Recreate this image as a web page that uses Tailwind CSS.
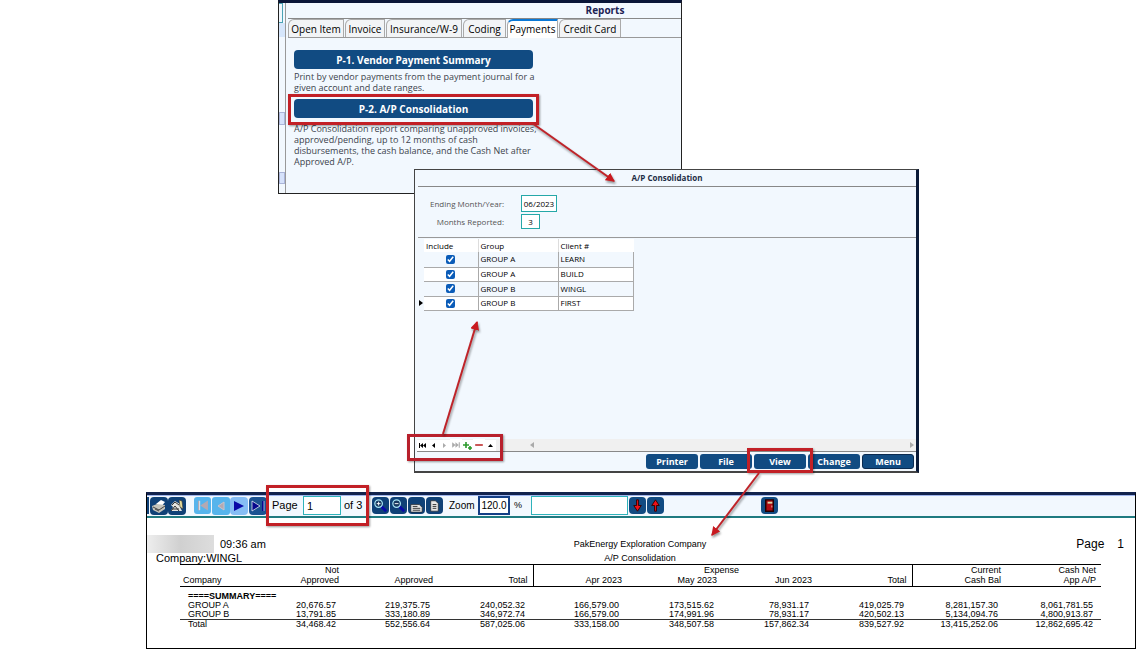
<!DOCTYPE html>
<html lang="en">
<head>
<meta charset="utf-8">
<title>A/P Consolidation</title>
<script src="https://cdn.jsdelivr.net/npm/@tailwindcss/browser@4"></script>
</head>
<body class="relative min-h-screen overflow-hidden bg-white font-['Open_Sans',sans-serif] text-black">

<!-- Reports window -->
<section class="absolute left-[278px] top-0 flex h-[194px] w-[404px] border border-t-3 border-[#222] border-t-[#0a1638] bg-[#f2f8fe]">
  <div class="flex w-[7px] flex-col border-r border-[#999]">
    <div class="h-[20px] w-[4px] border border-l-0 border-[#4ba3b5]"></div>
    <div class="h-[14px] bg-[#d6e6fb]"></div>
    <div class="mt-[75px] h-[13px] border border-[#aab4d8] bg-[#d6e2fb]"></div>
    <div class="mt-[47px] h-[12px] border border-[#aab4d8] bg-[#d6e2fb]"></div>
  </div>
  <div class="flex-1 pl-[2px]">
    <h1 class="flex h-[16px] items-center justify-center border-b border-[#888] pb-[2px] pl-[241px] text-[10px] font-bold leading-none text-[#1d2355]">Reports</h1>
    <div role="tablist" class="flex h-[19px] gap-px border-b border-[#999] text-[10px] leading-none">
      <button role="tab" class="w-[56px] whitespace-nowrap rounded-tl-md border border-b-0 border-[#aaa] bg-[#f2f4f6]">Open Item</button>
      <button role="tab" class="w-[40px] rounded-tl-md border border-b-0 border-[#aaa] bg-[#f2f4f6]">Invoice</button>
      <button role="tab" class="w-[76px] rounded-tl-md border border-b-0 border-[#aaa] bg-[#f2f4f6]">Insurance/W-9</button>
      <button role="tab" class="w-[43px] rounded-tl-md border border-b-0 border-[#aaa] bg-[#f2f4f6]">Coding</button>
      <button role="tab" aria-selected="true" class="-mb-px w-[51px] rounded-tl-md border border-b-0 border-t-2 border-[#aaa] border-t-[#0a78d6] bg-white pb-[2px]">Payments</button>
      <button role="tab" class="w-[62px] whitespace-nowrap rounded-tl-md border border-b-0 border-[#aaa] bg-[#f2f4f6]">Credit Card</button>
    </div>
    <div class="flex w-[245px] flex-col pl-[6px] pt-[12px]">
      <button class="h-[19px] rounded-[4px] bg-[#114b82] text-[10px] font-bold leading-none text-white">P-1. Vendor Payment Summary</button>
      <p class="mt-[2px] whitespace-nowrap text-[9px] leading-[11px] text-[#3c434c]">Print by vendor payments from the payment journal for a<br>given account and date ranges.</p>
      <button class="mt-[6px] h-[19px] rounded-[4px] bg-[#114b82] text-[10px] font-bold leading-none text-white">P-2. A/P Consolidation</button>
      <p class="mt-[5px] whitespace-nowrap text-[9px] leading-[11px] text-[#3c434c]">A/P Consolidation report comparing unapproved invoices,<br>approved/pending, up to 12 months of cash<br>disbursements, the cash balance, and the Cash Net after<br>Approved A/P.</p>
    </div>
  </div>
</section>

<!-- A/P Consolidation window -->
<section class="absolute left-[414px] top-[169px] flex h-[304px] w-[505px] flex-col border border-r-3 border-b-2 border-[#444] border-r-[#0a1a38] bg-[#f2f8fe]">
  <h2 class="ml-[3px] flex h-[17px] items-center justify-center border-b border-[#888] text-[8px] font-bold leading-none text-[#1d2d45]">A/P Consolidation</h2>
  <form class="ml-[3px] grid h-[51px] grid-cols-[86px_1fr] content-start items-center gap-x-[17px] gap-y-[2px] border-b border-[#999] pt-[8px] text-[8px] leading-none text-[#555]">
    <label for="ending" class="whitespace-nowrap text-right">Ending Month/Year:</label>
    <input id="ending" value="06/2023" class="h-[17px] w-[36px] border border-[#25a8a8] bg-white text-center text-[8px] text-black">
    <label for="months" class="whitespace-nowrap text-right">Months Reported:</label>
    <input id="months" value="3" class="h-[15px] w-[19px] border border-[#25a8a8] bg-white text-center text-[8px] text-black">
  </form>
  <div class="flex">
    <div class="flex w-[9px] items-end pb-[5px] pl-[4px]"><svg class="h-[6px] w-[4px]" viewBox="0 0 4 6"><path d="M0 0L4 3L0 6Z"/></svg></div>
    <table class="mt-px w-[209px] table-fixed border-collapse bg-white text-[8px] leading-none">
      <colgroup><col class="w-[54px]"><col class="w-[80px]"><col class="w-[75px]"></colgroup>
      <thead><tr class="h-[13px] text-left"><th class="p-0 pl-[2px] font-normal">Include</th><th class="border-l border-[#ddd] p-0 pl-[2px] font-normal">Group</th><th class="border-l border-[#ddd] p-0 pl-[2px] font-normal">Client #</th></tr></thead>
      <tbody>
        <tr class="h-[15px] bg-[#f2f8fe]"><td class="border-b border-[#aaa] text-center"><input type="checkbox" checked aria-label="Include LEARN" class="mx-auto block size-[9px] accent-[#0b5cb8]"></td><td class="border-x border-b border-[#aaa] pl-[2px]">GROUP A</td><td class="border-x border-b border-[#aaa] pl-[2px]">LEARN</td></tr>
        <tr class="h-[14px]"><td class="border-b border-[#aaa] text-center"><input type="checkbox" checked aria-label="Include BUILD" class="mx-auto block size-[9px] accent-[#0b5cb8]"></td><td class="border-x border-b border-[#aaa] pl-[2px]">GROUP A</td><td class="border-x border-b border-[#aaa] pl-[2px]">BUILD</td></tr>
        <tr class="h-[15px] bg-[#f2f8fe]"><td class="border-b border-[#aaa] text-center"><input type="checkbox" checked aria-label="Include WINGL" class="mx-auto block size-[9px] accent-[#0b5cb8]"></td><td class="border-x border-b border-[#aaa] pl-[2px]">GROUP B</td><td class="border-x border-b border-[#aaa] pl-[2px]">WINGL</td></tr>
        <tr class="h-[14px]"><td class="border-b border-[#aaa] text-center"><input type="checkbox" checked aria-label="Include FIRST" class="mx-auto block size-[9px] accent-[#0b5cb8]"></td><td class="border-x border-b border-[#aaa] pl-[2px]">GROUP B</td><td class="border-x border-b border-[#aaa] pl-[2px]">FIRST</td></tr>
      </tbody>
    </table>
  </div>
  <div class="mt-auto ml-[2px] flex h-[13px] items-center border-b border-[#888] bg-[#f0f0f0]">
    <button aria-label="First" class="size-[11px] bg-white"><svg viewBox="0 0 11 11"><path d="M2 3h1v5H2zM6 3v5L3 5.500zM9 3v5L6 5.500z"/></svg></button>
    <button aria-label="Previous" class="size-[11px] bg-white"><svg viewBox="0 0 11 11"><path d="M7 3v5L4 5.500z"/></svg></button>
    <button aria-label="Next" class="size-[11px] bg-white"><svg viewBox="0 0 11 11"><path d="M4 3l3 2.500L4 8z" fill="#aaa"/></svg></button>
    <button aria-label="Last" class="size-[12px] bg-white"><svg viewBox="0 0 11 11"><path d="M2 3l3 2.500L2 8zM5 3l3 2.500L5 8zM8 3h1v5H8z" fill="#aaa"/></svg></button>
    <button aria-label="Add" class="size-[11px] bg-white"><svg viewBox="0 0 11 11"><path d="M4 2v6M1 5h6M8 6v4M6 8h4" stroke="#2c9a2c" stroke-width="1.600"/></svg></button>
    <button aria-label="Delete" class="size-[12px] bg-white"><svg viewBox="0 0 11 11"><path d="M2 5.500h7" stroke="#c03030" stroke-width="1.500"/></svg></button>
    <button aria-label="Up" class="size-[11px] bg-white"><svg viewBox="0 0 11 11"><path d="M3 7l2.500-3L8 7z"/></svg></button>
    <div class="flex flex-1 items-center justify-between pl-[34px] pr-[2px]">
      <svg class="h-[6px] w-[4px]" viewBox="0 0 4 6"><path d="M4 0v6L0 3z" fill="#aaa"/></svg>
      <svg class="h-[6px] w-[4px]" viewBox="0 0 4 6"><path d="M0 0v6l4-3z" fill="#aaa"/></svg>
    </div>
  </div>
  <div class="flex h-[19px] items-center justify-end gap-[2px] pr-[2px] text-[9px] font-bold leading-none text-white">
    <button class="h-[15px] w-[52px] rounded-[3px] bg-[#114b82]">Printer</button>
    <button class="h-[15px] w-[52px] rounded-[3px] bg-[#114b82]">File</button>
    <button class="h-[15px] w-[52px] rounded-[3px] bg-[#114b82]">View</button>
    <button class="h-[15px] w-[52px] rounded-[3px] bg-[#114b82]">Change</button>
    <button class="h-[15px] w-[52px] rounded-[3px] border border-[#0a2a50] bg-[#114b82]">Menu</button>
  </div>
</section>

<!-- Report preview window -->
<section class="absolute left-[146px] right-0 top-[492px] flex h-[157px] flex-col border border-t-3 border-black border-t-[#12234d] bg-white font-['Liberation_Sans',sans-serif]">
  <div class="flex h-[23px] items-center border-b-2 border-t border-b-[#1f7a80] border-t-[#9fb4ec] bg-[#f2f8fe] pb-px text-[11px] leading-none">
    <div class="h-[17px] w-[2px] bg-[#0f4177]"></div>
    <button aria-label="Print" class="ml-px size-[18px] rounded-[4px] bg-[#0f4177]"><svg viewBox="0 0 18 18"><path d="M6 7l5-4 4 2-4 5z" fill="#fff"/><path d="M2 9l5-2 8 1v4l-6 4-6-3z" fill="#c4c4bc"/><path d="M3 10l6 3 6-4M5 12l4 2" stroke="#444" fill="none"/></svg></button>
    <button aria-label="Print setup" class="size-[18px] rounded-[4px] bg-[#0f4177]"><svg viewBox="0 0 18 18"><path d="M3 8l4-4 5 3v3l2 4H3l2-4z" fill="#e4e4e0"/><path d="M4 8l3-3 4 3M3 14l4-5 4 5M4 12h7" stroke="#333" fill="none"/><path d="M11 3l3 1 1 8-3-2z" fill="#e6dc9a" stroke="#333" stroke-width=".6"/></svg></button>
    <button aria-label="First page" class="ml-[8px] size-[17px] rounded-[3px] bg-[#56b4ec]"><svg viewBox="0 0 18 18"><path d="M5 4v10M14 5v8L8 9z" fill="#b4a9b2" stroke="#b4a9b2" stroke-width="1.500"/><path d="M6 14V4" stroke="#e5e8f0"/></svg></button>
    <button aria-label="Previous page" class="ml-px size-[18px] rounded-[3px] bg-[#56b4ec]"><svg viewBox="0 0 18 18"><path d="M12 5v8L6 9z" fill="#b4a9b2" stroke="#c9c3cc"/></svg></button>
    <button aria-label="Next page" class="size-[18px] rounded-[4px] bg-[#86bdf5]"><svg viewBox="0 0 18 18"><path d="M4 4l10 5-10 5z" fill="#0909a8"/></svg></button>
    <button aria-label="Last page" class="ml-px size-[18px] rounded-[4px] bg-[#1b5292]"><svg viewBox="0 0 18 18"><path d="M3 4l8 5-8 5z" fill="#07078d" stroke="#fff" stroke-width=".7"/><path d="M14 4v10" stroke="#07078d" stroke-width="2"/><path d="M15 4v10" stroke="#dce7ff" stroke-width=".7"/></svg></button>
    <label for="page" class="ml-[5px] w-[31px]">Page</label>
    <input id="page" value="1" class="h-[19px] w-[38px] border border-[#2fb3bb] bg-white px-[3px]">
    <span class="ml-[3px] w-[28px] whitespace-nowrap">of 3</span>
    <button aria-label="Zoom in" class="size-[17px] rounded-[4px] bg-[#0f4177]"><svg viewBox="0 0 18 18"><path d="M10 10l5 5" stroke="#0909a8" stroke-width="3"/><circle cx="7" cy="7" r="4" fill="#17385f" stroke="#a8e5f5" stroke-width="1.300"/><path d="M7 5v4M5 7h4" stroke="#fff"/></svg></button>
    <button aria-label="Zoom out" class="ml-px size-[17px] rounded-[4px] bg-[#0f4177]"><svg viewBox="0 0 18 18"><path d="M10 10l5 5" stroke="#0909a8" stroke-width="3"/><circle cx="7" cy="7" r="4" fill="#17385f" stroke="#a8e5f5" stroke-width="1.300"/><path d="M5 7h4" stroke="#fff"/></svg></button>
    <button aria-label="Page width" class="ml-px size-[17px] rounded-[4px] bg-[#0f4177]"><svg viewBox="0 0 18 18"><path d="M3 8h9l3 3v5H3z" fill="#e8e8e8" stroke="#222" stroke-width=".7"/><path d="M5 10h5M5 12h8M5 14h8" stroke="#333"/></svg></button>
    <button aria-label="Whole page" class="ml-px size-[17px] rounded-[4px] bg-[#0f4177]"><svg viewBox="0 0 18 18"><path d="M5 4h5l3 3v8H5z" fill="#e8e8e8" stroke="#222" stroke-width=".7"/><path d="M7 8h4M7 10h4M7 12h4" stroke="#333"/></svg></button>
    <label for="zoom" class="ml-[6px] w-[29px] whitespace-nowrap text-[10px]">Zoom</label>
    <input id="zoom" value="120.0" class="h-[19px] w-[32px] border-2 border-[#143f86] bg-white text-center text-[10px]">
    <span class="ml-[4px] w-[17px] text-[9px]">%</span>
    <input aria-label="Find" class="h-[19px] w-[97px] border border-[#2fb3bb] bg-white">
    <button aria-label="Find next" class="ml-px size-[17px] rounded-[4px] bg-[#114b82]"><svg viewBox="0 0 18 18"><path d="M8 3h2v6h3l-4 6-4-6h3z" fill="#f01018" stroke="#300"/></svg></button>
    <button aria-label="Find previous" class="ml-px size-[17px] rounded-[4px] bg-[#114b82]"><svg viewBox="0 0 18 18"><path d="M8 15h2V9h3L9 3 5 9h3z" fill="#f01018" stroke="#300"/></svg></button>
    <button aria-label="Close" class="ml-[97px] size-[17px] rounded-[4px] bg-[#114b82]"><svg viewBox="0 0 18 18"><path d="M5 3h8v12H5z" fill="#b00c14" stroke="#200" stroke-width="1.500"/><path d="M7 5h5v2H7z" fill="#d8d8a8"/><path d="M11 9h1v2h-1z" fill="#ffb0a0"/></svg></button>
  </div>

  <div class="mt-[17px] grid h-[29px] grid-cols-[1fr_200px_1fr] grid-rows-[18px_11px] pr-[2px] leading-none">
    <div class="flex items-center gap-[6px] text-[11px]">
      <span class="h-[18px] w-[67px] bg-linear-to-r from-[#eee] via-[#d0d0d0] to-[#ddd]"></span>
      <span>09:36 am</span>
    </div>
    <div class="flex items-center justify-center whitespace-nowrap pt-px text-[9px]">PakEnergy Exploration Company</div>
    <div class="flex items-center justify-end gap-[13px] pr-[9px] text-[12px]"><span>Page</span><span>1</span></div>
    <div class="pl-[9px] text-[11px]">Company:WINGL</div>
    <div class="whitespace-nowrap pt-px text-center text-[9px]">A/P Consolidation</div>
  </div>

  <div class="pl-[33px] pr-[34px]">
    <table class="w-full table-fixed border-collapse border-t border-black text-right text-[9px] leading-none">
      <colgroup><col class="w-[69px]"><col class="w-[95px]"><col class="w-[94px]"><col class="w-[95px]"><col class="w-[94px]"><col class="w-[95px]"><col class="w-[95px]"><col class="w-[95px]"><col class="w-[94px]"><col class="w-[95px]"></colgroup>
      <thead class="[&_th]:p-0 [&_th]:pr-[5px] [&_th]:font-normal">
        <tr class="h-[11px]"><th></th><th>Not</th><th></th><th class="border-r border-black"></th><th></th><th><span class="-mr-[22px]">Expense</span></th><th></th><th class="border-r border-black"></th><th>Current</th><th>Cash Net</th></tr>
        <tr class="h-[11px] border-b border-black"><th class="text-left"><span class="pl-[3px]">Company</span></th><th>Approved</th><th>Approved</th><th class="border-r border-black">Total</th><th>Apr 2023</th><th>May 2023</th><th>Jun 2023</th><th class="border-r border-black">Total</th><th>Cash Bal</th><th>App A/P</th></tr>
      </thead>
      <tbody class="[&_td]:p-0 [&_td]:pr-[8px] [&_th]:whitespace-nowrap [&_th]:p-0 [&_th]:pl-[8px] [&_th]:text-left">
        <tr class="h-[14px]"><th colspan="10" class="align-bottom font-bold">====SUMMARY====</th></tr>
        <tr class="h-[9px]"><th class="font-normal">GROUP A</th><td>20,676.57</td><td>219,375.75</td><td>240,052.32</td><td>166,579.00</td><td>173,515.62</td><td>78,931.17</td><td>419,025.79</td><td>8,281,157.30</td><td>8,061,781.55</td></tr>
        <tr class="h-[10px] border-b border-[#333]"><th class="font-normal">GROUP B</th><td>13,791.85</td><td>333,180.89</td><td>346,972.74</td><td>166,579.00</td><td>174,991.96</td><td>78,931.17</td><td>420,502.13</td><td>5,134,094.76</td><td>4,800,913.87</td></tr>
        <tr class="h-[9px]"><th class="font-normal">Total</th><td>34,468.42</td><td>552,556.64</td><td>587,025.06</td><td>333,158.00</td><td>348,507.58</td><td>157,862.34</td><td>839,527.92</td><td>13,415,252.06</td><td>12,862,695.42</td></tr>
      </tbody>
    </table>
  </div>
</section>

<!-- Callout boxes and arrows -->
<div class="pointer-events-none absolute left-[288px] top-[94px] h-[31px] w-[251px] border-3 border-[#c22026] shadow-[1px_1px_2px_#0006]"></div>
<div class="pointer-events-none absolute left-[407px] top-[434px] h-[27px] w-[96px] border-3 border-[#b8202c] shadow-[1px_1px_2px_#0006]"></div>
<div class="pointer-events-none absolute left-[747px] top-[448px] h-[25px] w-[66px] border-3 border-[#c22026] shadow-[1px_1px_2px_#0006]"></div>
<div class="pointer-events-none absolute left-[266px] top-[485px] h-[41px] w-[103px] border-3 border-[#c22026] shadow-[1px_1px_2px_#0006]"></div>
<svg class="pointer-events-none absolute left-0 top-0 h-[649px] w-[1136px] drop-shadow-[1px_2px_1px_#0006]" viewBox="0 0 1136 649" fill="none" stroke="#bf2329" stroke-width="2">
  <defs><marker id="head" viewBox="0 0 8 8" refX="7" refY="4" markerUnits="userSpaceOnUse" markerWidth="9" markerHeight="9" orient="auto"><path d="M0 0L8 4L0 8Z" fill="#c9191f" stroke="none"/></marker></defs>
  <path d="M532 123L614 181" marker-end="url(#head)"/>
  <path d="M443 434L477 322" marker-end="url(#head)"/>
  <path d="M759 473L712 535" marker-end="url(#head)"/>
</svg>
</body>
</html>
